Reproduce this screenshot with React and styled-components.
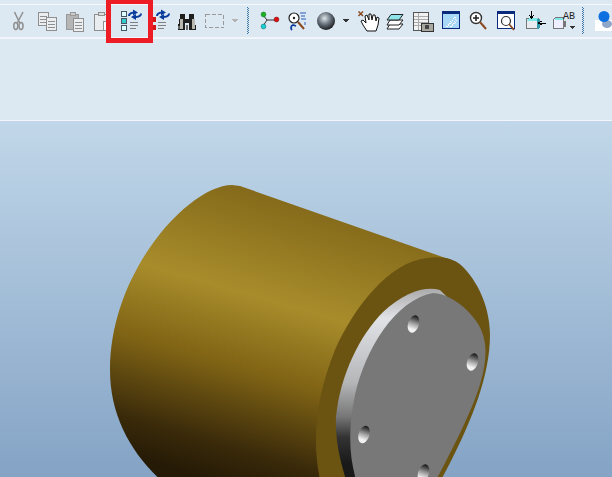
import React from "react";
import styled, { createGlobalStyle } from "styled-components";

const Global = createGlobalStyle`
  html, body { margin: 0; padding: 0; width: 612px; height: 477px; overflow: hidden; background: #dce9f2; }
  #root { width: 612px; height: 477px; }
`;
const Page = styled.div`
  position: relative; width: 612px; height: 477px; display: flex; flex-direction: column; overflow: hidden;
  background: #dce9f2;
`;
const TopStrip = styled.div`height: 5px; background: #dce9f2; border-bottom: 1px solid #f4f8fb;`;
const Toolbar = styled.div`
  display: flex; height: 32px; flex: none; background: #dce8f2; padding-left: 6px;
  border-bottom: 2px solid #f2f6fa;
`;
const Slot = styled.svg`display: block; flex: none; width: ${p => p.$w}px; height: 32px;`;
const Ribbon = styled.div`height: 81px; flex: none; background: #dce9f2;`;
const Viewport = styled.div`
  flex: 1; border-top: 1px solid #f2f6fa;
  background: linear-gradient(180deg, #c1d7e9 0%, #84a3c5 100%);
`;
const Scene = styled.svg`display: block; width: 612px; height: 356px;`;
const Highlight = styled.div`
  position: absolute; left: 106px; top: 0; width: 47px; height: 43px; box-sizing: border-box;
  border: 5px solid #ee1c25; border-top-width: 4px;
`;

const Tool = ({ x, w, children }) => (
  <Slot $w={w} viewBox={`${x} 6 ${w} 32`} fill="none" shapeRendering="crispEdges">{children}</Slot>
);
const Smooth = styled.g`shape-rendering: geometricPrecision;`;
const G = "#8f8f8f";

const Sep = ({ x }) => (
  <Tool x={x} w={12}>
    <path d={`M${x + 6.5} 8V35`} stroke="#3f78a8" strokeDasharray="1 1" />
    <path d={`M${x + 7.5} 9V35`} stroke="#3f78a8" strokeDasharray="1 1" />
  </Tool>
);
const Arrows = ({ x }) => (
  <Smooth>
    <path d={`M${x + 1} 17q0-3 5-3.5`} stroke="#0a3c9c" strokeWidth="2" />
    <path d={`M${x + 5} 10.5l5 3-5 3z`} fill="#0a3c9c" />
    <path d={`M${x + 13} 14.5q0 3-5 3.5`} stroke="#0a3c9c" strokeWidth="2" />
    <path d={`M${x + 8} 15l-5 3 5 3z`} fill="#0a3c9c" />
  </Smooth>
);
const Lines = ({ x, y }) => (
  <path d={`M${x} ${y}h8M${x} ${y + 3}h8M${x} ${y + 6}h6`} stroke="#808080" />
);
const DownTri = ({ cx, c }) => <path d={`M${cx - 3} 20h7l-3.5 4z`} fill={c} />;

const Page1 = ({ x, y, w = 10, h = 13 }) => (
  <g>
    <rect x={x + 0.5} y={y + 0.5} width={w} height={h} fill="#eaeef0" stroke={G} />
    <path d={`M${x + 2} ${y + 4.5}h${w - 3}M${x + 2} ${y + 7.5}h${w - 3}M${x + 2} ${y + 10.5}h${w - 3}`} stroke={G} />
  </g>
);

const tools = [
  { x: 6, w: 26, d: <Smooth stroke={G} strokeWidth="1.5">
      <path d="M14.5 13l5 10.5M23 13l-5.5 10.5" /><ellipse cx="15.8" cy="27" rx="2" ry="3.4" /><ellipse cx="21" cy="27" rx="2" ry="3.4" /></Smooth> },
  { x: 32, w: 29, d: <g><Page1 x={38} y={13} /><Page1 x={46} y={18} /></g> },
  { x: 61, w: 28, d: <g>
      <rect x="66.5" y="15.5" width="12" height="15" fill="#b5b5b5" stroke="#999" /><rect x="70" y="13" width="5" height="3" fill="#ccc" stroke="#999" /><Page1 x={73} y={19} /></g> },
  { x: 89, w: 27, d: <g>
      <rect x="94.5" y="15.5" width="13" height="16" fill="#e9edef" stroke={G} /><rect x="98" y="13" width="6" height="3" fill="#ddd" stroke={G} />
      <rect x="103.5" y="22.5" width="6" height="9" fill="#fff" stroke={G} /><path d="M106 24v1M106 27v1M106 30v1" stroke="#555" /></g> },
  { x: 116, w: 28, d: <g>
      <rect x="121.5" y="12.5" width="5" height="5" fill="#dff" stroke="#456" /><rect x="121.5" y="19.5" width="5" height="5" fill="#3cc" stroke="#456" />
      <rect x="121.5" y="26.5" width="5" height="5" fill="#dff" stroke="#456" /><Arrows x={128} /><Lines x={130} y={23} /></g> },
  { x: 144, w: 32, d: <g>
      <path d="M153 18h3v5h-3zM153 26h3v5h-3z" fill="#d01818" /><Arrows x={156} /><Lines x={158} y={23} /></g> },
  { x: 176, w: 22, d: <g>
      <path d="M180 15h5v5h4v-5h5v3l2 10v3h-7v-7h-4v7h-7v-3l2-10z" fill="#1f1f1f" />
      <path d="M180 20h3v10h-3zM192 20h3v10h-3z" fill="#b8b8b0" /><path d="M186 26h2v5h-2zM178 27h2v3h-2z" fill="#666" /></g> },
  { x: 198, w: 30, d: <rect x="205.5" y="15.5" width="18" height="13" stroke="#999" strokeWidth="1" strokeDasharray="4 2" /> },
  { x: 228, w: 13, d: <DownTri cx={234.5} c="#b3b3b3" /> },
  { sep: 241 },
  { x: 253, w: 30, d: <Smooth>
      <path d="M263 16l4 5h8M267 21l-4 6" stroke="#333" strokeWidth="1" />
      <circle cx="263.5" cy="15.5" r="2.4" fill="#1bb51b" stroke="#063" strokeWidth=".5" />
      <circle cx="276.5" cy="20.5" r="2.4" fill="#e01010" stroke="#600" strokeWidth=".5" />
      <circle cx="263.5" cy="27.5" r="2.4" fill="#18d0d0" stroke="#066" strokeWidth=".5" /></Smooth> },
  { x: 283, w: 30, d: <Smooth>
      <circle cx="294" cy="19" r="5" fill="#fff" stroke="#222" strokeWidth="1.2" /><circle cx="294" cy="19" r="1.2" fill="#222" />
      <path d="M298 23l6 7" stroke="#8a4a20" strokeWidth="2" />
      <path d="M300 14h6M301 17h4M301 20h5M305 23v3" stroke="#2a5ab8" strokeWidth="1" />
      <path d="M292 31a3 3 0 0 1 1-5l3 1" stroke="#0a3c9c" strokeWidth="1.8" /></Smooth> },
  { x: 313, w: 26, d: <Smooth><defs>
        <radialGradient id="ball" cx=".42" cy=".35" r=".7"><stop offset="0" stopColor="#dfe6ea" /><stop offset=".5" stopColor="#66707a" /><stop offset="1" stopColor="#111" /></radialGradient></defs>
      <circle cx="326" cy="22" r="9" fill="url(#ball)" /></Smooth> },
  { x: 339, w: 14, d: <DownTri cx={345.5} c="#333" /> },
  { x: 353, w: 30, d: <Smooth>
      <path d="M358.5 12.5l4.5 4.5M363 12.5l-4.5 4.5" stroke="#8a4a20" strokeWidth="1.5" />
      <path d="M367 32l-4-6-2-4 2-1 3 3-1-7 2-1 2 5v-6h2l1 6 1-5h2l1 6 1-4 2 1-1 7-2 6z" fill="#fff" stroke="#111" strokeWidth="1" /></Smooth> },
  { x: 383, w: 23, d: <Smooth stroke="#222" strokeWidth="1">
      <path d="M390 25h13l-4 5h-12z" fill="#fff" /><path d="M390 21h13l-4 5h-12z" fill="#fff" /><path d="M391 15.5h12l-4 5.5h-12z" fill="#8fe4e8" /></Smooth> },
  { x: 406, w: 31, d: <g>
      <rect x="413.5" y="13.5" width="15" height="18" fill="#f2f2f2" stroke="#555" /><path d="M414 17h14M414 20h14M414 23h14M414 26h14M418 14v17" stroke="#aaa" />
      <rect x="421" y="24" width="12" height="8" fill="#a8a8a0" stroke="#333" /><circle cx="427" cy="28" r="2.4" fill="#444" /></g> },
  { x: 437, w: 27, d: <g>
      <rect x="442.5" y="12.5" width="17" height="17" fill="#a8d8f8" stroke="#0a2a7c" /><rect x="442" y="12" width="18" height="3" fill="#0a2a7c" />
      <path d="M447 28l8-10M451 28l6-8" stroke="#fff" strokeWidth="2" strokeDasharray="1 1" /></g> },
  { x: 464, w: 28, d: <Smooth>
      <circle cx="476" cy="19" r="5.5" fill="#fff" stroke="#333" strokeWidth="1.4" /><path d="M473 19h6M476 16v6" stroke="#222" strokeWidth="1.6" />
      <path d="M480 23l6 7" stroke="#8a4a20" strokeWidth="2" /></Smooth> },
  { x: 492, w: 28, d: <g>
      <rect x="497.5" y="12.5" width="17" height="17" fill="#fff" stroke="#0a2a7c" /><rect x="497" y="12" width="18" height="3" fill="#0a2a7c" />
      <Smooth><circle cx="506" cy="22" r="4.5" fill="#fff" stroke="#333" strokeWidth="1.2" /><path d="M509 25l5 6" stroke="#8a4a20" strokeWidth="1.8" /></Smooth></g> },
  { x: 520, w: 29, d: <g>
      <rect x="526.5" y="19.5" width="12" height="10" fill="#e8ecf0" stroke="#777" /><path d="M527 22l2-3h9v3z" fill="#7fe8e8" /><path d="M537 20h3v8l-2 2h-1z" fill="#39a" />
      <path d="M531.5 12v7M529.5 16.5l2 3 2-3M546 24h-7M541.5 22l-3 2 3 2" stroke="#000" /></g> },
  { x: 549, w: 27, d: <g>
      <path d="M553.5 20.5l2-2h8v11h-10z" fill="#eef" stroke="#777" /><path d="M555 19h8v2h-8z" fill="#7fe8e8" /><path d="M563 22h3v6h-3z" fill="#777" />
      <text x="563" y="20" fontFamily="Liberation Mono, monospace" fontSize="10" fill="#222">A</text>
      <text x="569" y="20" fontFamily="Liberation Mono, monospace" fontSize="10" fill="#222">B</text>
      <path d="M569 27h6l-3 3z" fill="#333" /></g> },
  { sep: 576 },
  { x: 588, w: 24, d: <g>
      <rect x="595" y="21" width="17" height="11" fill="#fff" />
      <Smooth><ellipse cx="607" cy="25" rx="5" ry="4" fill="#8fa6c8" />
      <circle cx="604" cy="17.5" r="5.5" fill="#0d6fe0" /></Smooth></g> },
];

const Model = () => (
  <Scene viewBox="0 121 612 356">
    <defs>
      <linearGradient id="body" gradientUnits="userSpaceOnUse" x1="262" y1="178" x2="178" y2="470">
        <stop offset="0" stopColor="#7f6518" />
        <stop offset=".38" stopColor="#a88c2b" />
        <stop offset=".62" stopColor="#806415" />
        <stop offset=".88" stopColor="#3a2a0a" />
        <stop offset="1" stopColor="#251a06" />
      </linearGradient>
      <linearGradient id="chamfer" gradientUnits="userSpaceOnUse" x1="0" y1="288" x2="0" y2="477">
        <stop offset="0" stopColor="#a9a9aa" />
        <stop offset=".16" stopColor="#e1e2e6" />
        <stop offset=".5" stopColor="#b5b6b8" />
        <stop offset=".68" stopColor="#777" />
        <stop offset=".79" stopColor="#333" />
        <stop offset=".93" stopColor="#191919" />
      </linearGradient>
      <linearGradient id="hole" x1="0" y1="0" x2="0" y2="1">
        <stop offset="0" stopColor="#111" />
        <stop offset=".45" stopColor="#999" />
        <stop offset=".8" stopColor="#f2f2f2" />
      </linearGradient>
    </defs>
    <path d="M232 185C190 185 110 270 110 370C110 420 135 460 172 490L400 490L440 300L457 262L240 186Z" fill="url(#body)" />
    <path d="M427 258C442 256 455 258 464 268C480 285 490 310 490 335C490 375 472 420 450 463L441 480L320 480C312 440 315 400 335 350C355 305 390 262 427 258Z" fill="#6b5412" />
    <path d="M440 290C425 286 405 292 383 312C360 335 340 375 336 417C335 440 340 460 346 480L400 480L450 300Z" fill="url(#chamfer)" />
    <path d="M433 293C445 293 462 303 473 317C482 328 485 338 485.5 350C486 380 470 415 443 467L436 480L356 480C349 455 348 430 355 395C365 350 395 300 433 293Z" fill="#787878" />
    {[[413.5, 324], [472.5, 362], [364, 434.5], [423.5, 473]].map(([cx, cy]) => (
      <ellipse key={cx} cx={cx} cy={cy} rx="5.4" ry="9" transform={`rotate(18 ${cx} ${cy})`} fill="url(#hole)" />
    ))}
  </Scene>
);

export default function App() {
  return (
    <Page>
      <Global />
      <TopStrip />
      <Toolbar>
        {tools.map((t, i) => t.sep ? <Sep key={i} x={t.sep} /> : <Tool key={i} x={t.x} w={t.w}>{t.d}</Tool>)}
      </Toolbar>
      <Ribbon />
      <Viewport><Model /></Viewport>
      <Highlight />
    </Page>
  );
}
